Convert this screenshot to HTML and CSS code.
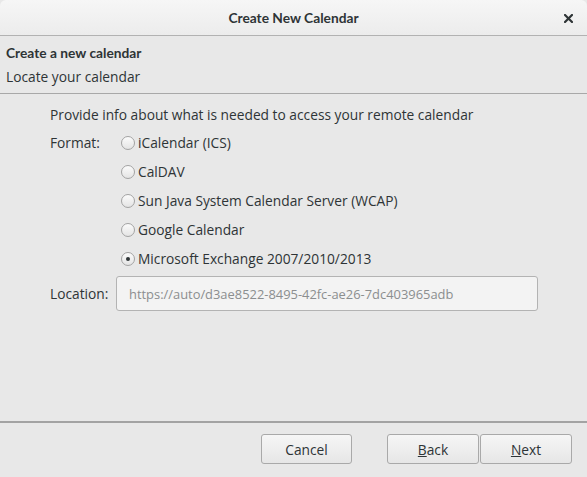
FILE: index.html
```html
<!DOCTYPE html>
<html>
<head>
<meta charset="utf-8">
<link rel="stylesheet" href="styles.css">
</head>
<body>
<div class="window">
  <div class="titlebar">
    <span class="title">Create New Calendar</span>
    <span class="close"><svg width="9" height="9" viewBox="0 0 9 9"><path d="M1 1 L8 8 M8 1 L1 8" stroke="#2e3436" stroke-width="2.2" stroke-linecap="square"/></svg></span>
  </div>
  <div class="header">
    <div class="h1">Create a new calendar</div>
    <div class="h2">Locate your calendar</div>
  </div>
  <div class="content">
    <div class="intro">Provide info about what is needed to access your remote calendar</div>
    <div class="form">
      <div class="label fmt">Format:</div>
      <div class="options">
        <label class="opt"><span class="radio"></span>iCalendar (ICS)</label>
        <label class="opt"><span class="radio"></span>CalDAV</label>
        <label class="opt"><span class="radio"></span>Sun Java System Calendar Server (WCAP)</label>
        <label class="opt"><span class="radio"></span>Google Calendar</label>
        <label class="opt"><span class="radio checked"></span>Microsoft Exchange 2007/2010/2013</label>
      </div>
      <div class="label loc">Location:</div>
      <div class="input">https://auto/d3ae8522-8495-42fc-ae26-7dc403965adb</div>
    </div>
  </div>
  <div class="footer">
    <button class="btn cancel">Cancel</button>
    <div class="nav">
      <button class="btn"><u>B</u>ack</button>
      <button class="btn"><u>N</u>ext</button>
    </div>
  </div>
</div>
</body>
</html>
```
FILE: styles.css
```css
* { box-sizing: border-box; }
html, body { margin: 0; padding: 0; }
body {
  background: #e8e8e8;
  font-family: "Open Sans", "DejaVu Sans", sans-serif;
  font-size: 13.75px;
  color: #2e3436;
  width: 587px;
  height: 477px;
  overflow: hidden;
}
.window {
  width: 587px;
  height: 477px;
  display: flex;
  flex-direction: column;
  background: #e8e8e8;
  border-radius: 6px 6px 0 0;
}
.titlebar {
  position: relative;
  height: 36px;
  border-bottom: 1px solid #b2b2b2;
  background: linear-gradient(#f6f6f6, #ececec);
  border-radius: 6px 6px 0 0;
  display: flex;
  align-items: center;
  justify-content: center;
}
.title, .h1 {
  font-family: Lato, "Open Sans", sans-serif;
  font-weight: bold;
  font-size: 13.75px;
}
.close {
  position: absolute;
  right: 14px;
  top: 14px;
  width: 9px;
  height: 9px;
  display: flex;
}
.header {
  height: 58px;
  border-bottom: 1px solid #a8a8a8;
  padding: 7px 6px 0;
  line-height: 20px;
}
.h2 { margin-top: 4px; }
.content {
  height: 327px;
  padding: 11px 0 0 50px;
  line-height: 20px;
}
.form {
  display: grid;
  grid-template-columns: 71px 1fr;
  margin-top: 3px;
}
.fmt { height: 29px; display: flex; align-items: center; }
.options { display: flex; flex-direction: column; }
.opt {
  height: 29px;
  display: flex;
  align-items: center;
}
.radio {
  width: 14px;
  height: 14px;
  border: 1px solid #a3a3a3;
  border-radius: 50%;
  background: linear-gradient(#fbfbfb, #e4e4e4);
  margin-right: 3px;
  display: flex;
  align-items: center;
  justify-content: center;
  margin-top: 1px;
}
.radio.checked::after {
  content: "";
  width: 4px;
  height: 4px;
  border-radius: 50%;
  background: #2e3436;
}
.loc { height: 35px; margin-top: 3px; display: flex; align-items: center; }
.input {
  margin: 3px 0 0 -5px;
  width: 422px;
  height: 35px;
  border: 1px solid #b3b3b3;
  border-radius: 3px;
  background: #f3f3f3;
  color: #8b8e8f;
  padding-left: 12px;
  font-size: 12.9px;
  display: flex;
  align-items: center;
}
.footer {
  border-top: 2px solid #a3a3a3;
  padding: 11px 15px 0 261px;
  display: flex;
  justify-content: space-between;
}
.nav { display: flex; gap: 1px; }
.btn {
  width: 91px;
  height: 30px;
  border: 1px solid #a9a9a9;
  border-radius: 3px;
  background: linear-gradient(#f6f6f6, #e6e6e6);
  font-family: inherit;
  font-size: 13.75px;
  color: #2e3436;
  padding: 0;
}
.nav .btn { width: 92px; }
```
